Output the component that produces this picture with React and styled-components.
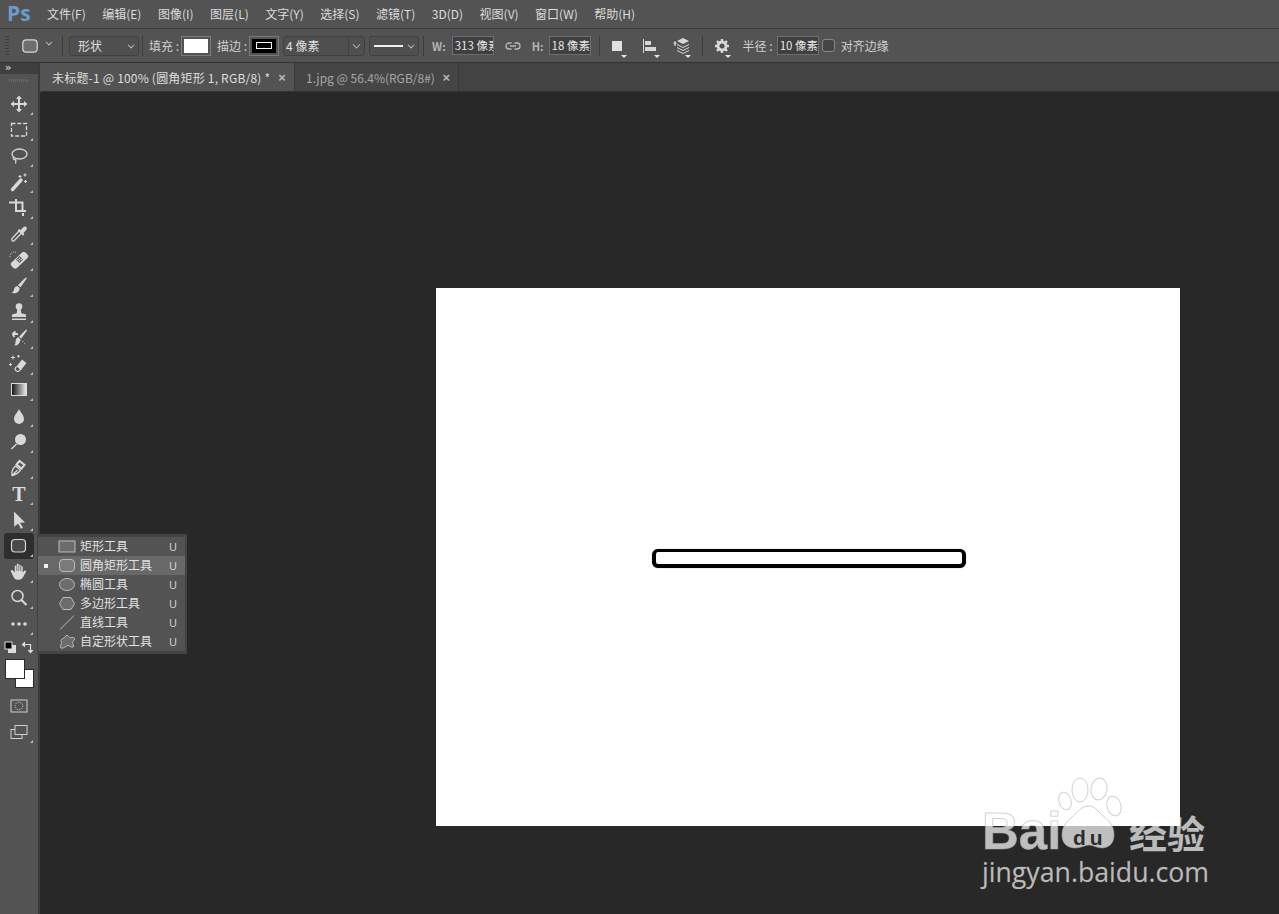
import React from "react"
import styled, { createGlobalStyle } from "styled-components"

const cjk = `"Noto Sans CJK SC", "Open Sans", sans-serif`

const GlobalStyle = createGlobalStyle`
  html, body {
    margin: 0;
    height: 100%;
    overflow: hidden;
    background: #282828;
  }
  * {
    box-sizing: border-box;
  }
`

const Window = styled.div`
  display: flex;
  flex-direction: column;
  width: 100%;
  height: 100vh;
  font-family: ${cjk};
  font-size: 12px;
  color: #d6d6d6;
  background: #535353;
`

const MenuBar = styled.div`
  display: flex;
  align-items: center;
  flex: 0 0 29px;
  padding: 0 0 2px 7px;
  background: #535353;
  border-bottom: 1px solid #3a3a3a;
`

const Logo = styled.span`
  width: 40px;
  font-family: "Open Sans", sans-serif;
  font-size: 21px;
  font-weight: 700;
  line-height: 26px;
  color: #6b9bcb;
`

const Menu = styled.div`
  display: flex;
  gap: 16.5px;
`

const MenuItem = styled.span`
  font-size: 12px;
  line-height: 17px;
  color: #dcdcdc;
`

const OptionsBar = styled.div`
  display: flex;
  align-items: center;
  flex: 0 0 34px;
  padding-left: 5px;
  background: #535353;
  border-bottom: 1px solid #323232;
`

const Grip = styled.div`
  width: 4px;
  height: 20px;
  margin-right: 13px;
  background: repeating-linear-gradient(to bottom, #3d3d3d 0 1px, transparent 1px 3px);
`

const Sep = styled.div`
  width: 1px;
  height: 20px;
  margin: 0 ${(p) => p.$gap || 6}px;
  background: #3c3c3c;
`

const Field = styled.div`
  position: relative;
  display: flex;
  align-items: center;
  flex: 0 0 ${(p) => p.$w}px;
  height: 20px;
  margin-left: ${(p) => p.$ml || 0}px;
  padding-left: ${(p) => p.$pl ?? 8}px;
  border: 1px solid #404040;
  border-radius: 3px;
  background: #4f4f4f;
  color: #e0e0e0;
`

const Caret = styled.span`
  position: absolute;
  right: 4px;
  top: 5px;
  width: 6px;
  height: 6px;
  border-right: 1px solid #c8c8c8;
  border-bottom: 1px solid #c8c8c8;
  transform: rotate(45deg) scale(0.8);
`

const SplitCaret = styled.span`
  position: absolute;
  right: 0;
  top: 0;
  width: 16px;
  height: 18px;
  border-left: 1px solid #404040;

  &::after {
    content: "";
    position: absolute;
    right: 4px;
    top: 4px;
    width: 6px;
    height: 6px;
    border-right: 1px solid #c8c8c8;
    border-bottom: 1px solid #c8c8c8;
    transform: rotate(45deg) scale(0.8);
  }
`

const OptLabel = styled.span`
  flex: 0 0 auto;
  margin: 0 ${(p) => p.$right ?? 2}px 0 ${(p) => p.$left ?? 0}px;
  color: ${(p) => p.$dim ? "#b4b4b4" : "#cfcfcf"};
  font-size: ${(p) => p.$small ? 11 : 12}px;
  font-weight: ${(p) => p.$small ? 600 : 400};
`

const Swatch = styled.div`
  display: flex;
  align-items: center;
  justify-content: center;
  flex: 0 0 30px;
  height: 20px;
  padding: 2px;
  border: 1px solid #7c7c7c;
  background: #535353;
`

const SwatchFill = styled.div`
  display: flex;
  align-items: center;
  justify-content: center;
  width: 100%;
  height: 100%;
  background: ${(p) => p.$color};
`

const StrokePreview = styled.div`
  width: 16px;
  height: 7px;
  border: 1px solid #fff;
  background: #000;
`

const StrokeLine = styled.div`
  width: 29px;
  height: 2px;
  background: #f0f0f0;
`

const NumberBox = styled.div`
  flex: 0 0 42px;
  height: 19px;
  padding-left: 2px;
  overflow: hidden;
  white-space: nowrap;
  border: 1px solid #6e6e6e;
  background: #3f3f3f;
  color: #e6e6e6;
  font-size: 11.5px;
  line-height: 17px;
`

const OptIcon = styled.div`
  position: relative;
  display: flex;
  align-items: center;
  justify-content: ${(p) => p.$center ? "center" : "flex-start"};
  flex: 0 0 ${(p) => p.$w}px;
  height: 24px;
  margin-left: ${(p) => p.$ml || 0}px;

  &::after {
    content: "";
    display: ${(p) => p.$menu ? "block" : "none"};
    position: absolute;
    right: 0;
    bottom: 0;
    border-left: 3px solid transparent;
    border-right: 3px solid transparent;
    border-top: 3px solid #e8e8e8;
  }
`

const CheckBox = styled.div`
  flex: 0 0 13px;
  height: 13px;
  margin: 0 6px 0 3px;
  border: 1px solid #888;
  border-radius: 3px;
  background: #454545;
`

const Body = styled.div`
  display: flex;
  flex: 1;
  min-height: 0;
`

const ToolBar = styled.div`
  display: flex;
  flex-direction: column;
  align-items: center;
  flex: 0 0 40px;
  background: #535353;
  border-right: 2px solid #3b3b3b;
`

const ToolBarHead = styled.div`
  flex: 0 0 11px;
  width: 100%;
  padding-left: 5px;
  background: #3f3f3f;
  color: #c8c8c8;
  font-family: "DejaVu Sans", sans-serif;
  font-size: 10px;
  font-weight: 700;
  line-height: 10px;
`

const ToolGrip = styled.div`
  flex: 0 0 3px;
  width: 20px;
  margin: 5px 0 9px;
  background: repeating-linear-gradient(to right, #6a6a6a 0 1px, transparent 1px 2px);
`

const Tool = styled.div`
  position: relative;
  display: flex;
  align-items: center;
  justify-content: center;
  flex: 0 0 26px;
  width: 30px;
  border-radius: 3px;
  background: ${(p) => p.$active ? "#2e2e2e" : "transparent"};
  color: #d8d8d8;

  &::after {
    content: "";
    display: ${(p) => p.$plain ? "none" : "block"};
    position: absolute;
    right: 1px;
    bottom: 2px;
    border-left: 3px solid transparent;
    border-bottom: 3px solid #bcbcbc;
  }
`

const TypeGlyph = styled.span`
  font-family: "Liberation Serif", serif;
  font-size: 20px;
  font-weight: 700;
  line-height: 20px;
  color: #dcdcdc;
`

const ColorControls = styled.div`
  display: flex;
  justify-content: space-between;
  flex: 0 0 13px;
  width: 30px;
  margin-top: 4px;
`

const Swatches = styled.div`
  display: grid;
  grid-template-columns: 10px 19px;
  grid-template-rows: 10px 19px;
  flex: 0 0 29px;
  width: 29px;
  margin: 5px 0 5px 0;
`

const FgSwatch = styled.div`
  grid-area: 1 / 1 / 3 / 3;
  z-index: 1;
  width: 20px;
  height: 20px;
  background: #fff;
  border: 1px solid #2a2a2a;
`

const BgSwatch = styled.div`
  grid-area: 2 / 2 / 3 / 3;
  width: 19px;
  height: 19px;
  background: #fff;
  border: 1px solid #2a2a2a;
`

const Main = styled.div`
  display: flex;
  flex-direction: column;
  flex: 1;
  min-width: 0;
`

const TabBar = styled.div`
  display: flex;
  flex: 0 0 29px;
  margin-left: 1px;
  background: #434343;
  border-bottom: 1px solid #333;
`

const Tab = styled.div`
  display: flex;
  align-items: center;
  justify-content: space-between;
  flex: 0 0 ${(p) => p.$w}px;
  padding: 0 8px 0 11px;
  background: ${(p) => p.$active ? "#535353" : "#454545"};
  border-right: 1px solid #383838;
  color: ${(p) => p.$active ? "#dedede" : "#a6a6a6"};
  font-size: 12px;
  letter-spacing: ${(p) => p.$active ? 0.2 : 0}px;
  white-space: nowrap;
`

const TabClose = styled.span`
  font-family: "Liberation Sans", sans-serif;
  font-size: 13px;
  font-weight: 700;
  color: #b8b8b8;
`

const Stage = styled.div`
  position: relative;
  flex: 1;
  padding: 196px 0 0 396px;
  background: #282828;
`

const Doc = styled.div`
  width: 744px;
  height: 538px;
  padding: 261px 0 0 216px;
  background: #fff;
`

const RoundedShape = styled.div`
  width: 314px;
  height: 19px;
  background: #fff;
  border: 4px solid #000;
  border-top-width: 3px;
  border-radius: 6px;
  box-shadow: 0 0 1px #666;
`

const Flyout = styled.div`
  position: absolute;
  left: 37px;
  top: 534px;
  z-index: 5;
  width: 150px;
  height: 120px;
  padding: 3px 2px 3px 1px;
  background: #434343;
`

const FlyoutList = styled.div`
  display: flex;
  flex-direction: column;
  height: 114px;
  background: #535353;
`

const FlyoutRow = styled.div`
  display: grid;
  grid-template-columns: 14px 22px 1fr 10px;
  align-items: center;
  flex: 0 0 19px;
  padding: 0 6px;
  background: ${(p) => p.$active ? "#686868" : "transparent"};
  color: #e2e2e2;
  font-size: 12px;
  line-height: 19px;
  white-space: nowrap;
`

const RowLabel = styled.span`
  margin-top: -2px;
`

const Bullet = styled.span`
  width: 4px;
  height: 4px;
  background: ${(p) => p.$on ? "#f0f0f0" : "transparent"};
`

const RowIcon = styled.span`
  display: flex;
  align-items: center;
`

const Key = styled.span`
  color: #dcdcdc;
  font-family: "Open Sans", sans-serif;
  font-size: 11px;
`

const Watermark = styled.div`
  position: absolute;
  right: 69px;
  bottom: 27px;
  display: flex;
  flex-direction: column;
  width: 228px;
  color: rgba(255, 255, 255, 0.7);
`

const BrandRow = styled.div`
  position: relative;
  display: flex;
  align-items: center;
  height: 42px;
  margin-bottom: 4px;
`

const Bai = styled.span`
  width: 147px;
  font-family: "Liberation Sans", sans-serif;
  font-size: 51px;
  font-weight: 700;
  line-height: 42px;
  -webkit-text-stroke: 1px rgba(170, 170, 170, 0.5);
`

const Du = styled.span`
  position: absolute;
  left: 91px;
  top: 18px;
  z-index: 1;
  font-family: "Liberation Sans", sans-serif;
  font-size: 21px;
  font-weight: 700;
  letter-spacing: 4px;
  line-height: 18px;
  color: #2c2c2c;
`

const Paw = styled.svg`
  position: absolute;
  left: 76px;
  top: -35px;
`

const Jingyan = styled.span`
  font-size: 38px;
  font-weight: 700;
  line-height: 42px;
  white-space: nowrap;
`

const Url = styled.span`
  font-family: "Open Sans", sans-serif;
  font-size: 26.7px;
  line-height: 30px;
  white-space: nowrap;
  -webkit-text-stroke: 0.3px rgba(170, 170, 170, 0.5);
`

const Icon = ({ size = 20, box = 20, children }) => (
  <svg width={size} height={size} viewBox={`0 0 ${box} ${box}`} fill="none" stroke="none">
    {children}
  </svg>
)

const c = "#d8d8d8"

const toolIcons = {
  move: (
    <Icon>
      <path fill={c} d="M10 1.5l3 3.5h-2v4h4V7l3.5 3-3.5 3v-2h-4v4h2l-3 3.5L7 15h2v-4H5v2l-3.5-3L5 7v2h4V5H7z" />
    </Icon>
  ),
  marquee: (
    <Icon>
      <rect x="2.5" y="3.5" width="15" height="12.5" stroke={c} strokeWidth="1.3" strokeDasharray="4 1.8" />
    </Icon>
  ),
  lasso: (
    <Icon>
      <ellipse cx="10.5" cy="8" rx="7.5" ry="5" stroke={c} strokeWidth="1.3" />
      <path stroke={c} strokeWidth="1.3" d="M4.5 11c-1 2 .5 3 1.5 2.5s1 2 .5 4" />
    </Icon>
  ),
  wand: (
    <Icon>
      <path stroke={c} strokeWidth="3.4" strokeLinecap="round" d="M3.5 17.5L12 8" />
      <path stroke={c} strokeWidth="1.2" d="M11 3v3M9.5 4.5h3M16 1.5v3M14.5 3h3M16.5 8v3M15 9.5h3" />
    </Icon>
  ),
  crop: (
    <Icon>
      <path stroke={c} strokeWidth="2" d="M0 4.5h4M14 18v-3M7 1v12h10M4 4.5h9.5V13" />
    </Icon>
  ),
  dropper: (
    <Icon>
      <path stroke={c} strokeWidth="1.3" d="M10.5 6.5L3.5 14c-1 1-1 2-.5 2.7s1.600.6 2.600-.4l7-7.300z" />
      <path fill={c} d="M10 5l1.600 1 2.400-2.600c1-1 2.600-1.400 3.400-.3.800 1 .3 2.400-.6 3.300L14.400 9l1 1.600-1.400 1.200-5.200-5.400z" />
    </Icon>
  ),
  heal: (
    <Icon>
      <path fill={c} d="M13 2.500c1-1 2.500-1 3.500 0l2 2c1 1 1 2.500 0 3.500L8 18c-1 1-2.500 1-3.500 0l-2-2c-1-1-1-2.500 0-3.500z" />
      <path fill="#535353" d="M10.500 6l3.500 3.500-3.500 3.500L7 9.500z" />
      <circle cx="10.500" cy="8.300" r=".8" fill={c} />
      <circle cx="10.500" cy="10.700" r=".8" fill={c} />
      <circle cx="8.800" cy="9.500" r=".8" fill={c} />
      <circle cx="12.200" cy="9.500" r=".8" fill={c} />
      <path stroke={c} strokeDasharray="1 1" d="M1 7a4.500 4.500 0 0 1 6.500-4.500" />
    </Icon>
  ),
  brush: (
    <Icon>
      <path fill={c} d="M17.500 1.500c.5.300 0 1.500-.8 2.600l-5.200 7.200-2.600-2L15 3c1-.9 2-1.700 2.500-1.500z" />
      <path fill={c} d="M8.200 10l2.500 2c0 2.500-1.700 4.800-4.400 5.200-1.300.2-2.700 0-3.800-.7 1.800-.5 2.200-1.500 2.500-3 .3-2 1.700-3.400 3.700-3.500z" />
    </Icon>
  ),
  stamp: (
    <Icon>
      <circle cx="10" cy="4.500" r="3.300" fill={c} />
      <path fill={c} d="M8.300 7h3.400l.6 4.200 4.700 1.300V15H3v-2.500l4.700-1.300z" />
      <rect x="3" y="16.500" width="14" height="1.500" fill={c} />
    </Icon>
  ),
  history: (
    <Icon>
      <path fill={c} d="M18 1.500c.3.500-.2 1.500-1 2.500l-4.700 6.600-2.300-1.800L15.500 3c1-.9 2-1.800 2.500-1.500z" />
      <path fill={c} d="M9.300 9.300l2.200 1.900c0 2.400-1.500 5-3.800 6-1 .4-1.800.2-2.200-.3.700-.7.800-1.800 1-3 .2-2.500 1-4.200 2.800-4.600z" />
      <path stroke={c} strokeWidth="1.800" d="M9 6H3.500M3.500 6l3-2.500M3.500 6l2 3" />
      <path stroke={c} strokeDasharray="1 1.500" d="M13.500 13l2.500 3" />
    </Icon>
  ),
  eraser: (
    <Icon>
      <path fill={c} d="M13 5.500l4.500 3.500-5.500 7-4.500-3.500z" />
      <path stroke={c} strokeWidth="1.200" d="M7.500 12.500l-1 1.300c-.7 1-.5 2 .3 2.700l.8.600c.9.700 2 .5 2.700-.4l1.700-1.700" />
      <path stroke={c} strokeWidth="1" d="M4 1.500v4M2 3.500h4M1.500 9v3M0 10.500h3M9.500 1v2.500M8 2.200h3" />
    </Icon>
  ),
  gradient: (
    <Icon>
      <defs>
        <linearGradient id="grad" x1="0" x2="1" y1="0" y2="0">
          <stop offset="0" stopColor="#111" />
          <stop offset="1" stopColor="#eee" />
        </linearGradient>
      </defs>
      <rect x="2.500" y="3.500" width="15" height="12" fill="url(#grad)" stroke="#ddd" strokeWidth="1" />
    </Icon>
  ),
  drop: (
    <Icon>
      <path fill={c} d="M10 3c1.200 3 5 6 5 10a5 5 0 0 1-10 0c0-4 3.800-7 5-10z" />
    </Icon>
  ),
  dodge: (
    <Icon>
      <circle cx="11.500" cy="7.500" r="5.500" fill={c} />
      <path stroke={c} strokeWidth="1.500" d="M7.500 12l-5 5" />
    </Icon>
  ),
  pen: (
    <Icon>
      <path stroke={c} strokeWidth="1.300" d="M3 17.500c-.5-3 .8-7 3.500-9.500l5 4c-2 2.800-5.500 5-8.500 5.500zM3 17.500L8.500 12" />
      <path stroke={c} strokeWidth="2" d="M7.500 6.500L10.500 3l5 4-3 3.500z" />
    </Icon>
  ),
  arrow: (
    <Icon>
      <path fill={c} d="M5 1.500l11 11-5 .3 3 5-2 1-2.800-5.300-4 3.200z" />
    </Icon>
  ),
  shape: (
    <Icon>
      <rect x="2.500" y="3.500" width="14" height="12.500" rx="3.500" fill="#4a4a4a" stroke={c} strokeWidth="1.200" />
    </Icon>
  ),
  hand: (
    <Icon>
      <path fill={c} d="M5.800 4.500c0-1.400 1.900-1.400 2 0V2.800c0-1.400 2-1.400 2 0v.700c.2-1.300 2-1.100 2 .300v1c.1-1.100 1.900-1 1.900.4v5.600l1.300-1.800c.9-1.100 2.600-.1 1.900 1.100l-2.700 5c-.9 1.700-2.300 2.600-4.300 2.600H8.500c-2 0-3-.9-3.800-2.400L2 9.700c-.6-1.300 1-2.300 2-1.200l1.800 2z" />
      <path stroke="#535353" strokeWidth=".7" d="M7.800 4v5M9.800 3v6M11.800 4v5" />
    </Icon>
  ),
  zoom: (
    <Icon>
      <circle cx="8.500" cy="8" r="5.500" stroke={c} strokeWidth="1.500" />
      <path stroke={c} strokeWidth="2.200" d="M12.500 12l5 5" />
    </Icon>
  ),
  more: (
    <Icon>
      <circle cx="4" cy="10" r="1.800" fill={c} />
      <circle cx="10" cy="10" r="1.800" fill={c} />
      <circle cx="16" cy="10" r="1.800" fill={c} />
    </Icon>
  ),
}

const toolList = [
  "move", "marquee", "lasso", "wand", "crop", "dropper", "heal", "brush", "stamp", "history",
  "eraser", "gradient", "drop", "dodge", "pen", "type", "arrow", "shape", "hand", "zoom", "more",
]

const flyoutItems = [
  { label: "矩形工具", icon: <rect x="1" y="2" width="16" height="11" fill="#6c6c6c" stroke="#bbb" /> },
  { label: "圆角矩形工具", active: true, icon: <rect x="1.500" y="1.500" width="15" height="12" rx="3.500" fill="#7a7a7a" stroke="#bbb" /> },
  { label: "椭圆工具", icon: <ellipse cx="9" cy="7.500" rx="7.500" ry="6" fill="#6c6c6c" stroke="#bbb" /> },
  { label: "多边形工具", icon: <path d="M5 1.500h8l3.500 6-3.500 6H5l-3.500-6z" fill="#6c6c6c" stroke="#bbb" /> },
  { label: "直线工具", icon: <path d="M2 14.500L16 .5" stroke="#bbb" /> },
  { label: "自定形状工具", icon: <path d="M8 1.500c1.500-1 2.500 1 3.500 2s4-1 5 .5-2 3-2 4.500 2 3.500.5 4.500-3-1.500-5-1.500-4 3.500-7 2.500c-2-.8 1-4.500.5-6S2 7 3.500 5.500 7 4 8 1.500z" fill="#6c6c6c" stroke="#bbb" /> },
]

const menus = ["文件(F)", "编辑(E)", "图像(I)", "图层(L)", "文字(Y)", "选择(S)", "滤镜(T)", "3D(D)", "视图(V)", "窗口(W)", "帮助(H)"]

export default function App() {
  return (
    <Window>
      <GlobalStyle />
      <MenuBar>
        <Logo>Ps</Logo>
        <Menu>
          {menus.map((m) => <MenuItem key={m}>{m}</MenuItem>)}
        </Menu>
      </MenuBar>

      <OptionsBar>
        <Grip />
        <OptIcon $w={34}>
          <Icon size={16} box={16}>
            <rect x=".8" y="1.800" width="14.400" height="12.400" rx="3.500" fill="#6e6e6e" stroke="#d8d8d8" strokeWidth="1.200" />
          </Icon>
          <Caret />
        </OptIcon>
        <Sep $gap={6} />
        <Field $w={70}>形状<Caret /></Field>
        <Sep $gap={3} />
        <OptLabel $left={3}>填充 :</OptLabel>
        <Swatch><SwatchFill $color="#fff" /></Swatch>
        <OptLabel $left={6}>描边 :</OptLabel>
        <Swatch><SwatchFill $color="#000"><StrokePreview /></SwatchFill></Swatch>
        <Field $w={82} $ml={4} $pl={2}>4 像素<SplitCaret /></Field>
        <Field $w={50} $ml={4} $pl={4}><StrokeLine /><Caret /></Field>
        <Sep $gap={4} />
        <OptLabel $small $dim $left={4} $right={6}>W:</OptLabel>
        <NumberBox>313 像素</NumberBox>
        <OptIcon $w={38} $center>
          <Icon size={16} box={16}>
            <path stroke="#b8b8b8" strokeWidth="1.300" d="M6.500 5H4a3 3 0 0 0 0 6h2.500M9.500 5H12a3 3 0 0 1 0 6H9.500M5 8h6" />
          </Icon>
        </OptIcon>
        <OptLabel $small $dim $right={5}>H:</OptLabel>
        <NumberBox>18 像素</NumberBox>
        <Sep $gap={8} />
        <OptIcon $w={16} $ml={3} $menu>
          <Icon size={12} box={12}><rect x="1" y="1" width="10" height="10" fill="#e0e0e0" /></Icon>
        </OptIcon>
        <OptIcon $w={18} $ml={15} $menu>
          <Icon size={16} box={16}>
            <path fill="#d8d8d8" d="M1 1h1v14H1zM3 3h6v4H3zM3 9h11v4H3z" />
          </Icon>
        </OptIcon>
        <OptIcon $w={20} $ml={11} $menu>
          <Icon size={20} box={20}>
            <path fill="#d8d8d8" d="M12 2l6 3-6 3-6-3zM2 7.500L4 5l2 2.500H4.700V10H3.300V7.500z" />
            <path stroke="#d8d8d8" d="M6 8.500l6 3 6-3M6 11.500l6 3 6-3M6 14.500l6 3 6-3" />
          </Icon>
        </OptIcon>
        <Sep $gap={11} />
        <OptIcon $w={16} $ml={1} $menu>
          <Icon size={14} box={14}>
            <circle cx="7" cy="7" r="4" stroke="#d8d8d8" strokeWidth="2.800" />
            <path stroke="#d8d8d8" strokeWidth="2.400" d="M7 0v2.500M7 11.500V14M0 7h2.500M11.500 7H14M2 2l1.800 1.800M10.200 10.200L12 12M2 12l1.800-1.800M10.200 3.800L12 2" />
          </Icon>
        </OptIcon>
        <OptLabel $left={12} $right={4}>半径 :</OptLabel>
        <NumberBox>10 像素</NumberBox>
        <CheckBox />
        <OptLabel>对齐边缘</OptLabel>
      </OptionsBar>

      <Body>
        <ToolBar>
          <ToolBarHead>»</ToolBarHead>
          <ToolGrip />
          {toolList.map((t) => (
            <Tool key={t} $active={t === "shape"}>
              {t === "type" ? <TypeGlyph>T</TypeGlyph> : toolIcons[t]}
            </Tool>
          ))}
          <ColorControls>
            <Icon size={13} box={13}>
              <rect x="4" y="4" width="8" height="8" fill="#ddd" />
              <rect x="1" y="1" width="7" height="7" fill="#000" stroke="#ddd" />
            </Icon>
            <Icon size={13} box={13}>
              <path stroke="#ddd" strokeWidth="1.200" d="M2 3.500h7.500V11" />
              <path fill="#ddd" d="M4 0.500v6L0.500 3.500zM6.500 9h6L9.500 12.500z" />
            </Icon>
          </ColorControls>
          <Swatches>
            <FgSwatch />
            <BgSwatch />
          </Swatches>
          <Tool $plain>
            <Icon size={18} box={18}>
              <rect x="1" y="3" width="16" height="12" stroke="#cfcfcf" strokeWidth="1" />
              <circle cx="9" cy="9" r="3.800" stroke="#e0e0e0" strokeDasharray="1 1.300" />
            </Icon>
          </Tool>
          <Tool>
            <Icon size={18} box={18}>
              <rect x="1" y="6.500" width="11" height="9" stroke="#cfcfcf" />
              <rect x="5" y="2.500" width="12" height="9" fill="#535353" stroke="#cfcfcf" />
            </Icon>
          </Tool>
        </ToolBar>

        <Main>
          <TabBar>
            <Tab $active $w={254}>未标题-1 @ 100% (圆角矩形 1, RGB/8) *<TabClose>×</TabClose></Tab>
            <Tab $w={164}>1.jpg @ 56.4%(RGB/8#)<TabClose>×</TabClose></Tab>
          </TabBar>
          <Stage>
            <Doc>
              <RoundedShape />
            </Doc>
            <Watermark>
              <BrandRow>
                <Paw width="68" height="76" viewBox="0 0 68 76" fill="none">
                  <g fill="rgba(255,255,255,.7)" stroke="rgba(170,170,170,.55)" strokeWidth="1">
                    <ellipse cx="22" cy="14" rx="8" ry="12" />
                    <ellipse cx="41" cy="13" rx="8" ry="11" transform="rotate(10 41 13)" />
                    <ellipse cx="7" cy="25" rx="6" ry="9" transform="rotate(-15 7 25)" />
                    <ellipse cx="56" cy="30" rx="7" ry="10" transform="rotate(-15 56 30)" />
                    <path d="M31 30c5 0 8 4 13 9 6 5 12 9 12 20 0 8-5 13-12 13-5 0-9-3-13-3s-8 3-14 3c-8 0-13-5-13-13 0-9 5-14 10-18 6-5 9-11 17-11z" />
                  </g>
                </Paw>
                <Bai>Bai</Bai>
                <Du>du</Du>
                <Jingyan>经验</Jingyan>
              </BrandRow>
              <Url>jingyan.baidu.com</Url>
            </Watermark>
          </Stage>
        </Main>
      </Body>

      <Flyout>
        <FlyoutList>
          {flyoutItems.map((item) => (
            <FlyoutRow key={item.label} $active={item.active}>
              <Bullet $on={item.active} />
              <RowIcon>
                <svg width="18" height="15" viewBox="0 0 18 15" fill="none">{item.icon}</svg>
              </RowIcon>
              <RowLabel>{item.label}</RowLabel>
              <Key>U</Key>
            </FlyoutRow>
          ))}
        </FlyoutList>
      </Flyout>
    </Window>
  )
}
